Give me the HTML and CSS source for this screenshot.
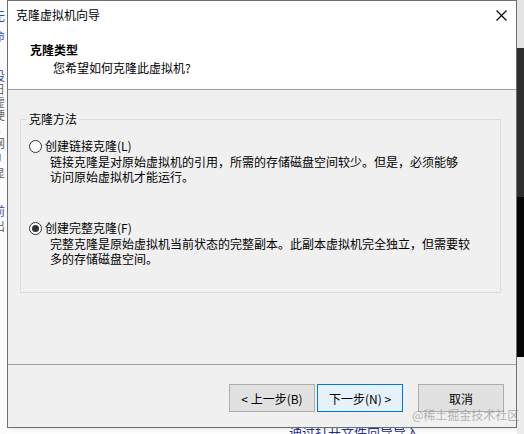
FILE: index.html
```html
<!DOCTYPE html>
<html lang="zh-CN">
<head>
<meta charset="utf-8">
<title>克隆虚拟机向导</title>
<link rel="stylesheet" href="styles.css">
</head>
<body>
<div class="screen">
  <div class="left-strip">
    <span class="frag blue f1">无</span>
    <span class="frag blue f2">命</span>
    <span class="frag blue f3">设</span>
    <span class="frag grey f4">日</span>
    <span class="frag grey f5">虚</span>
    <span class="frag grey f6">硬</span>
    <span class="frag grey f7">C</span>
    <span class="frag grey f8">网</span>
    <span class="frag grey f9">U</span>
    <span class="frag grey f10">显</span>
    <span class="frag blue f11">前</span>
    <span class="frag grey f12">出</span>
  </div>
  <div class="center-col">
    <div class="dialog">
      <div class="header">
        <div class="title-row">
          <span class="title">克隆虚拟机向导</span>
          <svg class="close" width="11" height="11" viewBox="0 0 11 11"><path d="M0.5 0.5L10.5 10.5M10.5 0.5L0.5 10.5" stroke="#000" stroke-width="1.1" fill="none"/></svg>
        </div>
        <div class="heading">克隆类型</div>
        <div class="subheading">您希望如何克隆此虚拟机?</div>
      </div>
      <div class="body">
        <fieldset class="group">
          <legend class="legend">克隆方法</legend>
          <div class="option">
            <div class="radio-row"><span class="radio"></span><span>创建链接克隆(L)</span></div>
            <div class="desc">链接克隆是对原始虚拟机的引用，所需的存储磁盘空间较少。但是，必须能够<br>访问原始虚拟机才能运行。</div>
          </div>
          <div class="option second">
            <div class="radio-row"><span class="radio checked"></span><span>创建完整克隆(F)</span></div>
            <div class="desc">完整克隆是原始虚拟机当前状态的完整副本。此副本虚拟机完全独立，但需要较<br>多的存储磁盘空间。</div>
          </div>
        </fieldset>
      </div>
      <div class="footer">
        <button class="btn">&lt; 上一步(B)</button>
        <button class="btn primary">下一步(N) &gt;</button>
        <button class="btn cancel">取消</button>
      </div>
    </div>
    <div class="below"><span class="below-text">通过打开文件向导导入</span></div>
  </div>
  <div class="right-strip">
    <div class="rs rs1"></div>
    <div class="rs rs2"></div>
    <div class="rs rs3"></div>
    <div class="rs rs4"></div>
  </div>
</div>
<div class="watermark">@稀土掘金技术社区</div>
</body>
</html>
```
FILE: styles.css
```css
* { box-sizing: border-box; }
html, body {
  margin: 0;
  padding: 0;
}
body {
  width: 524px;
  height: 434px;
  overflow: hidden;
  background: #ffffff;
  font-family: "Noto Sans CJK SC", "Noto Sans", sans-serif;
  font-size: 12px;
  color: #000;
  position: relative;
}
.screen {
  display: flex;
  height: 434px;
}
.left-strip {
  width: 7px;
  height: 434px;
  overflow: hidden;
  position: relative;
  background: #fbfbfb;
}
.frag {
  position: absolute;
  left: -7px;
  font-size: 12px;
  line-height: 12px;
}
.frag.blue { color: #3b4a9c; }
.frag.grey { color: #6a6a6a; }
.f1 { top: 10px; }
.f2 { top: 30px; }
.f3 { top: 70px; }
.f4 { top: 83px; }
.f5 { top: 96px; }
.f6 { top: 109px; }
.f7 { top: 123px; }
.f8 { top: 137px; }
.f9 { top: 152px; }
.f10 { top: 167px; }
.f11 { top: 205px; }
.f12 { top: 220px; }

.center-col {
  width: 510px;
  display: flex;
  flex-direction: column;
}
.dialog {
  width: 510px;
  height: 428px;
  border: 1px solid #6f6f6f;
  display: flex;
  flex-direction: column;
  background: #f0f0f0;
  box-shadow: 0 0 6px rgba(0,0,0,0.15);
}
.header {
  height: 89px;
  background: #ffffff;
  border-bottom: 1px solid #a0a0a0;
  padding-top: 6px;
}
.title-row {
  display: flex;
  justify-content: space-between;
  align-items: center;
  height: 16px;
  padding-left: 8px;
  padding-right: 9px;
}
.title { line-height: 16px; }
.close { display: block; margin-top: 1px; }
.heading {
  font-weight: bold;
  line-height: 16px;
  margin-top: 19px;
  padding-left: 22px;
}
.subheading {
  line-height: 16px;
  margin-top: 2px;
  padding-left: 45px;
}
.body {
  height: 275px;
  border-bottom: 1px solid #a0a0a0;
  padding-top: 21px;
}
.group {
  margin: 0 15px 0 12px;
  border: 1px solid #dcdcdc;
  padding: 11px 8px 26px 8px;
  min-width: 0;
}
.legend {
  line-height: 16px;
  padding: 0 2px;
  margin-left: -2px;
}
.option.second { margin-top: 36px; }
.radio-row {
  display: flex;
  align-items: center;
  line-height: 16px;
  height: 16px;
}
.radio {
  width: 13px;
  height: 13px;
  border: 1px solid #333333;
  border-radius: 50%;
  background: #ffffff;
  margin-right: 3px;
  flex: none;
  display: flex;
  align-items: center;
  justify-content: center;
}
.radio.checked::after {
  content: "";
  width: 7px;
  height: 7px;
  border-radius: 50%;
  background: #333333;
}
.desc {
  line-height: 15px;
  padding-left: 21px;
}
.footer {
  height: 62px;
  display: flex;
  justify-content: flex-end;
  align-items: flex-start;
  padding-top: 19px;
  padding-right: 12px;
}
.btn {
  width: 86px;
  height: 28px;
  border: 1px solid #adadad;
  background: #e1e1e1;
  font-family: inherit;
  font-size: 12px;
  color: #000;
  padding: 0;
  margin: 0;
  margin-left: 2px;
}
.btn.primary {
  border-color: #0078d7;
  background: #e5f1fb;
}
.btn.cancel { margin-left: 15px; }
.below {
  height: 6px;
  overflow: hidden;
  position: relative;
}
.below-text {
  position: absolute;
  left: 282px;
  top: -4px;
  font-size: 13px;
  line-height: 16px;
  color: #2a2f8a;
}
.right-strip {
  width: 7px;
  display: flex;
  flex-direction: column;
}
.rs1 { height: 48px; background: #e4e4e4; }
.rs2 { height: 149px; background: #2e2e2e; }
.rs3 { height: 160px; background: #050505; }
.rs4 { flex: 1; background: #ececec; }
.watermark {
  position: absolute;
  left: 412px;
  top: 407px;
  font-size: 12px;
  line-height: 16px;
  color: rgba(150,150,150,0.7);
}
```
